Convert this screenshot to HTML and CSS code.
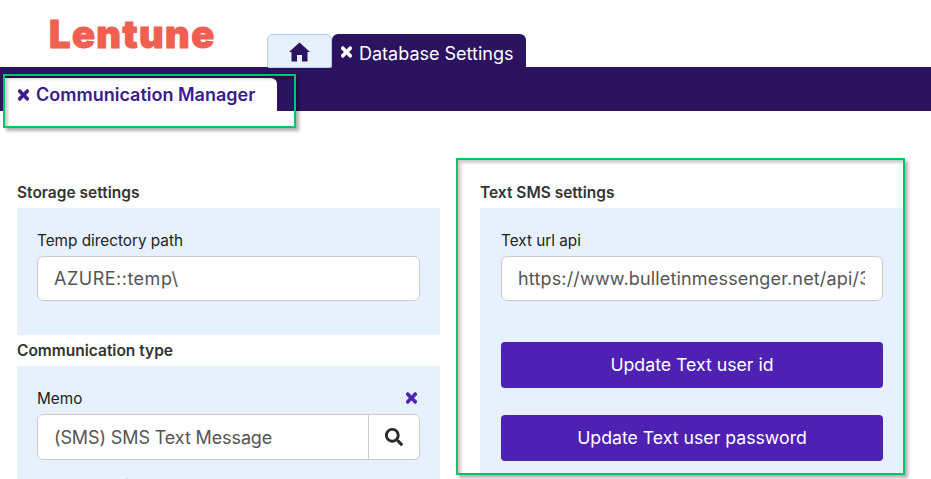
FILE: index.html
```html
<!DOCTYPE html>
<html lang="en">
<head>
<meta charset="utf-8">
<title>Communication Manager</title>
<link rel="stylesheet" href="styles.css">
</head>
<body>
<header class="top">
  <div class="logo">Lentune</div>
  <nav class="tabs">
    <a class="tab tab-home"><svg class="home-icon" viewBox="0 0 24 20"><path d="M12 0.5 L1.5 10 L4 10 L4 19.5 L9.5 19.5 L9.5 13 L14.5 13 L14.5 19.5 L20 19.5 L20 10 L22.5 10 Z"/></svg></a>
    <a class="tab tab-dark"><svg class="x" viewBox="0 0 352 512"><use href="#times"/></svg>Database Settings</a>
  </nav>
</header>
<div class="bar">
  <a class="tab-active"><svg class="x" viewBox="0 0 352 512"><use href="#times"/></svg>Communication Manager</a>
</div>
<main class="content">
  <section class="col">
    <h2 class="heading">Storage settings</h2>
    <div class="panel panel-left panel-storage">
      <label class="label">Temp directory path</label>
      <input class="input input-path" readonly value="AZURE::temp\">
    </div>
    <h2 class="heading">Communication type</h2>
    <div class="panel panel-left">
      <div class="label-row">
        <label class="label">Memo</label>
        <svg class="x x-clear" viewBox="0 0 352 512"><use href="#times"/></svg>
      </div>
      <div class="lookup">
        <input class="input input-lookup" readonly value="(SMS) SMS Text Message">
        <button class="search-btn"><svg class="search-icon" viewBox="0 0 512 512"><path d="M505 442.7L405.3 343c-4.5-4.5-10.6-7-17-7H372c27.6-35.3 44-79.7 44-128C416 93.1 322.9 0 208 0S0 93.1 0 208s93.1 208 208 208c48.3 0 92.7-16.4 128-44v16.3c0 6.4 2.5 12.5 7 17l99.7 99.7c9.4 9.4 24.6 9.4 33.9 0l28.3-28.3c9.4-9.4 9.4-24.6.1-34zM208 336c-70.7 0-128-57.2-128-128 0-70.7 57.2-128 128-128 70.7 0 128 57.2 128 128 0 70.7-57.2 128-128 128z"/></svg></button>
      </div>
      <label class="label label-next">Sender details</label>
    </div>
  </section>
  <section class="col">
    <h2 class="heading">Text SMS settings</h2>
    <div class="panel panel-sms">
      <label class="label">Text url api</label>
      <input class="input input-url" readonly value="https://www.bulletinmessenger.net/api/3/sms/out">
      <button class="btn btn-first">Update Text user id</button>
      <button class="btn">Update Text user password</button>
    </div>
  </section>
</main>
<div class="mark mark-tab"></div>
<div class="mark mark-sms"></div>
<svg class="defs" aria-hidden="true"><defs><path id="times" d="M242.72 256l100.07-100.07c12.28-12.28 12.28-32.19 0-44.48l-22.24-22.24c-12.28-12.28-32.19-12.28-44.48 0L176 189.28 75.93 89.21c-12.28-12.28-32.19-12.28-44.48 0L9.21 111.45c-12.28 12.28-12.28 32.19 0 44.48L109.28 256 9.21 356.07c-12.28 12.28-12.28 32.19 0 44.48l22.24 22.24c12.28 12.28 32.2 12.28 44.48 0L176 322.72l100.07 100.07c12.28 12.28 32.2 12.28 44.48 0l22.24-22.24c12.28-12.28 12.28-32.19 0-44.48L242.72 256z"/></defs></svg>
</body>
</html>
```

FILE: styles.css
```css
* { box-sizing: border-box; }
html, body { margin: 0; height: 479px; overflow: hidden; background: #fff; }
body { position: relative; font-family: Inter, "Noto Sans", sans-serif; color: #222; }

.top { display: flex; height: 67px; align-items: flex-end; }
.logo { width: 267px; height: 67px; padding: 12px 0 0 49px; font-size: 38px; line-height: 44px; font-weight: 900; color: #f06050; letter-spacing: 1.4px; -webkit-text-stroke: 1px #f06050; }
.tabs { display: flex; align-items: flex-start; height: 33px; position: relative; z-index: 1; }
.tab { display: flex; align-items: center; font-size: 18px; border-radius: 6px 6px 0 0; }
.tab-home { width: 65px; height: 34px; justify-content: center; background: #e7f1fe; border: 1px solid #a9cdf5; border-radius: 6px 6px 2px 2px; }
.home-icon { width: 25px; height: 20px; fill: #2c135f; margin-top: 1px; }
.tab-dark { width: 194px; height: 33px; padding: 6px 0 0 9px; background: #2c135f; color: #fff; }
.tab-dark .x { margin-top: -3px; }
.x { width: 11px; height: 16px; fill: currentColor; stroke: currentColor; stroke-width: 30; flex: none; margin-right: 7px; }

.bar { height: 44px; background: #2c135f; padding: 11px 0 0 4px; }
.tab-active { display: flex; align-items: flex-start; width: 273px; height: 33px; padding: 6px 0 0 14px; background: #fff; color: #3b1a8a; font-size: 18px; font-weight: 600; border-radius: 0 6px 0 0; }
.tab-active .x { margin-top: 3px; }

.content { display: grid; grid-template-columns: 423px 423px; column-gap: 40px; padding: 66px 0 0 17px; }
.heading { margin: 0; height: 31px; padding-top: 1px; font-size: 15.5px; line-height: 30px; font-weight: 600; color: #333; }
.panel { background: #e7f1fe; padding: 23px 20px 0 21px; }
.panel-left { padding-left: 20px; }
.panel-storage { height: 127px; }
.panel-sms { height: 267px; }
.label { display: block; height: 20px; font-size: 15.3px; line-height: 20px; color: #222; margin-bottom: 5px; }
.label-row { display: flex; justify-content: space-between; }
.x-clear { color: #4f21b3; margin: 1px 3px 0 0; }
.label-next { margin-top: 16px; }
.input { display: block; width: 100%; height: 45px; padding: 0 17px 0 16px; font: 18px Inter, "Noto Sans", sans-serif; color: #555; background: #fff; border: 1px solid #ccc; border-radius: 6px; outline: none; }
.input-path { letter-spacing: 0.5px; }
.input-url { letter-spacing: 0.17px; }
.lookup { display: flex; height: 46px; background: #fff; border: 1px solid #ccc; border-radius: 6px; }
.input-lookup { flex: 1; width: auto; height: 44px; border: 0; background: transparent; letter-spacing: -0.12px; }
.search-btn { width: 51px; padding: 0; background: none; border: 0; border-left: 1px solid #ccc; display: flex; align-items: center; justify-content: center; }
.search-icon { width: 18px; height: 18px; fill: #2a2a2a; }
.btn { display: block; width: 100%; height: 46px; margin-top: 27px; padding: 0 0 2px; border: 0; border-radius: 4px; background: #4f21b3; color: #fff; font: 400 17.7px Inter, "Noto Sans", sans-serif; }
.btn-first { margin-top: 41px; }

.mark { position: absolute; border: 2px solid #00c465; box-shadow: 3px 3px 3px rgba(0,0,0,.3), inset 3px 3px 3px rgba(0,0,0,.2); pointer-events: none; z-index: 2; }
.mark-tab { left: 3px; top: 74px; width: 293px; height: 54px; }
.mark-sms { left: 456px; top: 158px; width: 449px; height: 317px; }
.defs { position: absolute; width: 0; height: 0; }
```
